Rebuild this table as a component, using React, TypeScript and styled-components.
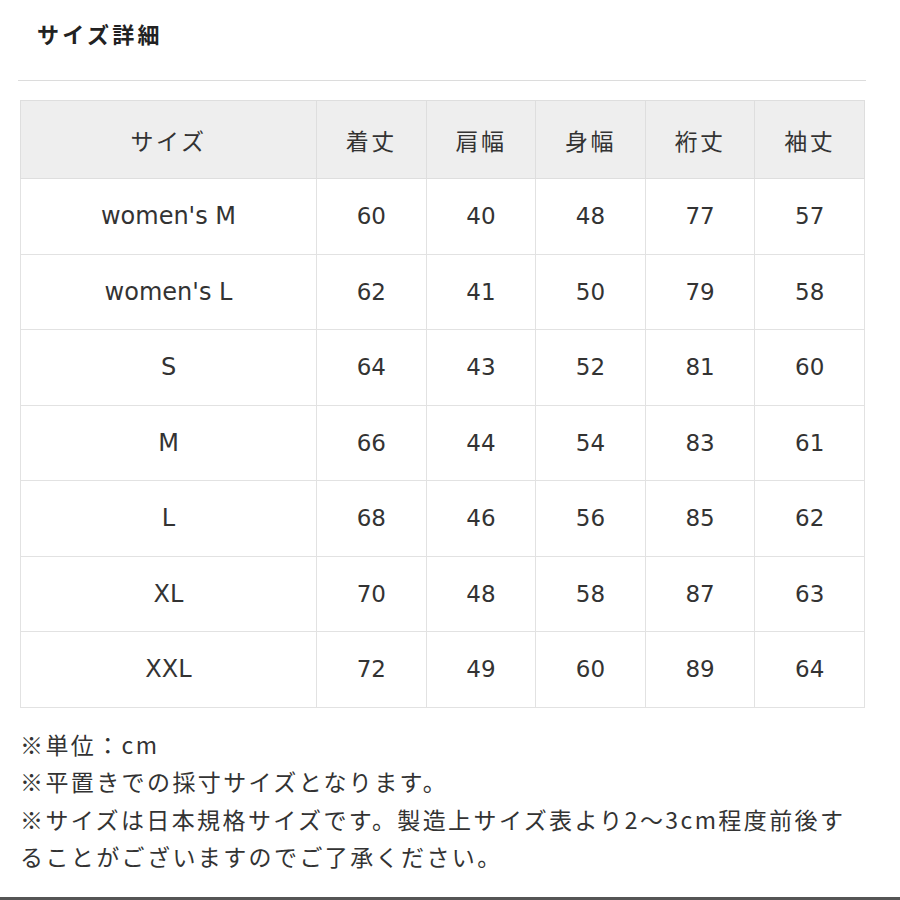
import React from 'react';
import styled, { createGlobalStyle } from 'styled-components';

const GlobalStyle = createGlobalStyle`
  html, body {
    margin: 0;
    padding: 0;
    background: #fff;
  }
  body {
    font-family: "DejaVu Sans", "Noto Sans CJK JP", sans-serif;
    color: #333;
    overflow: hidden;
  }
`;

const Page = styled.div`
  width: 900px;
  height: 900px;
  display: flex;
  flex-direction: column;
  border-bottom: 3px solid #555;
  box-sizing: border-box;
`;

const Header = styled.div`
  margin-left: 18px;
  width: 848px;
  padding: 19px 0 0 19px;
  height: 81px;
  box-sizing: border-box;
  border-bottom: 1px solid #dcdcdc;
`;

const Title = styled.h2`
  margin: 0;
  font-family: "Noto Sans CJK JP", sans-serif;
  font-size: 22px;
  line-height: 28px;
  font-weight: 700;
  letter-spacing: 3.3px;
  color: #222;
`;

const SizeTable = styled.table`
  margin: 19px 0 0 20px;
  width: 845px;
  border-collapse: collapse;
  table-layout: fixed;
`;

const HeadCell = styled.th<{ $wide?: boolean }>`
  ${(p) => (p.$wide ? 'width: 295px;' : '')}
  height: 77px;
  padding: 0;
  background: #eeeeee;
  border: 1px solid #dedede;
  font-family: "Noto Sans CJK JP", sans-serif;
  font-size: 23px;
  font-weight: 400;
  letter-spacing: 2.5px;
  color: #333;
  text-align: center;
`;

const Row = styled.tr`
  height: 75.5px;
`;

const Cell = styled.td<{ $label?: boolean }>`
  padding: 0;
  border: 1px solid #e2e2e2;
  font-size: ${(p) => (p.$label ? '24px' : '23px')};
  color: #333;
  text-align: center;
`;

const Notes = styled.div`
  margin: 18px 0 0 20px;
  width: 835px;
  font-family: "Noto Sans CJK JP", sans-serif;
  font-size: 23px;
  line-height: 37.5px;
  letter-spacing: 2.4px;
  color: #333;
`;

const Note = styled.p`
  margin: 0;
`;

const columns = ['着丈', '肩幅', '身幅', '裄丈', '袖丈'];

const rows: [string, number[]][] = [
  ["women's M", [60, 40, 48, 77, 57]],
  ["women's L", [62, 41, 50, 79, 58]],
  ['S', [64, 43, 52, 81, 60]],
  ['M', [66, 44, 54, 83, 61]],
  ['L', [68, 46, 56, 85, 62]],
  ['XL', [70, 48, 58, 87, 63]],
  ['XXL', [72, 49, 60, 89, 64]],
];

const App = () => {
  return (
    <Page>
      <GlobalStyle />
      <Header>
        <Title>サイズ詳細</Title>
      </Header>
      <SizeTable>
        <thead>
          <tr>
            <HeadCell $wide>サイズ</HeadCell>
            {columns.map((c) => (
              <HeadCell key={c}>{c}</HeadCell>
            ))}
          </tr>
        </thead>
        <tbody>
          {rows.map(([size, values]) => (
            <Row key={size}>
              <Cell $label>{size}</Cell>
              {values.map((v, i) => (
                <Cell key={i}>{v}</Cell>
              ))}
            </Row>
          ))}
        </tbody>
      </SizeTable>
      <Notes>
        <Note>※単位：cm</Note>
        <Note>※平置きでの採寸サイズとなります。</Note>
        <Note>
          ※サイズは日本規格サイズです。製造上サイズ表より2～3cm程度前後することがございますのでご了承ください。
        </Note>
      </Notes>
    </Page>
  );
};

export default App;
